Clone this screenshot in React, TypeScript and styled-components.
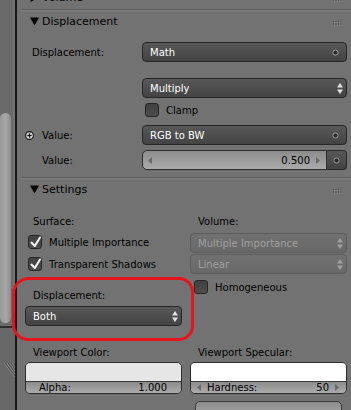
import React from 'react';
import styled, { createGlobalStyle } from 'styled-components';

const GlobalStyle = createGlobalStyle`
  html, body { margin: 0; padding: 0; }
  body { background: #727272; overflow: hidden; }
`;

const FONT = `"DejaVu Sans", "Liberation Sans", sans-serif`;

const Screen = styled.div`
  position: relative;
  display: flex;
  width: 351px;
  height: 410px;
  overflow: hidden;
  background: #727272;
  font-family: ${FONT};
  font-size: 10px;
  color: #000;
`;

const SideArea = styled.div`
  flex: none;
  width: 15px;
  display: flex;
  flex-direction: column;
  border-right: 2px solid #181818;
`;

const SideTop = styled.div`
  flex: none;
  box-sizing: border-box;
  height: 326px;
  padding-top: 113px;
  background: #6a6a6a;
  box-shadow: inset -2px 0 0 #737373;
`;

const ScrollThumb = styled.div`
  width: 11px;
  height: 210px;
  border-radius: 6px;
  background: linear-gradient(to right, #9a9a9a, #a7a7a7 55%, #8a8a8a);
`;

const SideBottom = styled.div`
  flex: 1;
  display: flex;
  justify-content: flex-end;
  padding-top: 35px;
  background: #686868;
  border-top: 2px solid #2e2e2e;
`;

const Region = styled.div`
  flex: 1;
  min-width: 0;
  margin-top: -15px;
  padding-left: 5px;
  display: flex;
  flex-direction: column;
`;

const Panel = styled.section`
  display: flex;
  flex-direction: column;
`;

const PanelHeader = styled.div`
  box-sizing: border-box;
  height: 24px;
  display: flex;
  align-items: center;
  gap: 3px;
  padding: 0 8px;
  border-top: 1px solid #5b5b5b;
  box-shadow: inset 0 1px 0 #808080;
  font-size: 11px;
`;

const HeaderTitle = styled.span`
  flex: 1;
`;

const NodeBody = styled.div`
  display: flex;
  flex-direction: column;
  padding: 9px 4px 7px 3px;
`;

const NodeRow = styled.div<{ $mt?: number }>`
  display: grid;
  grid-template-columns: 117px 1fr;
  align-items: center;
  height: 20px;
  margin-top: ${p => p.$mt ?? 0}px;
`;

const RowLabel = styled.div<{ $indent: number }>`
  display: flex;
  align-items: center;
  gap: 8px;
  padding-left: ${p => p.$indent}px;
`;

const MenuButton = styled.div<{ $disabled?: boolean; $mt?: number }>`
  box-sizing: border-box;
  height: 20px;
  margin-top: ${p => p.$mt ?? 0}px;
  display: flex;
  align-items: center;
  padding: 0 3px 0 7px;
  border-radius: 4px;
  border: 1px solid ${p => (p.$disabled ? '#5c5c5c' : '#272727')};
  background: ${p =>
    p.$disabled ? 'linear-gradient(#717171, #686868)' : 'linear-gradient(#585858, #434343)'};
  color: ${p => (p.$disabled ? '#a0a0a0' : '#ffffff')};
`;

const ButtonText = styled.span`
  flex: 1;
  white-space: nowrap;
`;

const IconSlot = styled.span<{ $mr: number }>`
  display: flex;
  margin-right: ${p => p.$mr}px;
`;

const CheckRow = styled.div<{ $indent?: number; $mt?: number }>`
  height: 20px;
  margin-top: ${p => p.$mt ?? 0}px;
  display: flex;
  align-items: center;
  gap: 7px;
  padding-left: ${p => p.$indent ?? 3}px;
  white-space: nowrap;
`;

const CheckBox = styled.span`
  position: relative;
  flex: none;
  box-sizing: border-box;
  width: 14px;
  height: 14px;
  border-radius: 3px;
  border: 1px solid #262626;
  background: linear-gradient(#404040, #4e4e4e);
  display: flex;
`;

const NumGroup = styled.div`
  display: flex;
  height: 20px;
`;

const NumField = styled.div<{ $radius: string; $pl: number; $pr: number; $bt?: boolean }>`
  flex: 1;
  box-sizing: border-box;
  height: ${p => (p.$bt ? 19 : 20)}px;
  display: flex;
  align-items: center;
  gap: 6px;
  padding: 0 ${p => p.$pr}px 0 ${p => p.$pl}px;
  border: ${p => (p.$bt ? 'none' : '1px solid #2e2e2e')};
  border-radius: ${p => p.$radius};
  background: linear-gradient(#8c8c8c, #ababab);
  color: #000;
`;

const NumLabel = styled.span`
  flex: 1;
  white-space: nowrap;
`;

const LinkButton = styled.div`
  box-sizing: border-box;
  width: 20px;
  height: 20px;
  display: flex;
  align-items: center;
  justify-content: center;
  border: 1px solid #272727;
  border-left: none;
  border-radius: 0 4px 4px 0;
  background: linear-gradient(#585858, #434343);
`;

const SettingsBody = styled.div`
  display: grid;
  grid-template-columns: 1fr 1fr;
  column-gap: 8px;
  row-gap: 16px;
  padding: 10px 4px 0 3px;
`;

const Column = styled.div`
  display: flex;
  flex-direction: column;
  min-width: 0;
`;

const FieldLabel = styled.div<{ $mt?: number }>`
  height: 20px;
  margin-top: ${p => p.$mt ?? 0}px;
  display: flex;
  align-items: center;
  padding-left: 8px;
`;

const ColorStack = styled.div`
  box-sizing: border-box;
  display: flex;
  flex-direction: column;
  border: 1px solid #2e2e2e;
  border-radius: 5px;
  overflow: hidden;
`;

const Swatch = styled.div<{ $color: string }>`
  height: 18px;
  background: ${p => p.$color};
  border-bottom: 1px solid #3a3a3a;
`;

const PartialWidget = styled.div`
  box-sizing: border-box;
  height: 20px;
  margin: 7px 5px 0 5px;
  border: 1px solid #3a3a3a;
  border-radius: 5px;
  background: linear-gradient(#8c8c8c, #ababab);
`;

const RedMark = styled.div`
  position: absolute;
  left: 12px;
  top: 277px;
  width: 182px;
  height: 64px;
  box-sizing: border-box;
  border: 3px solid #e8141d;
  border-radius: 17px 15px 15px 16px;
  pointer-events: none;
`;

/* ---------- drawings ---------- */

const Disclosure = ({ open }: { open: boolean }) => (
  <svg width="9" height="9" viewBox="0 0 9 9" style={{ flex: 'none' }}>
    {open ? (
      <polygon points="0,0.5 9,0.5 4.5,8.5" fill="#000" />
    ) : (
      <polygon points="0.5,0 8.5,4.5 0.5,9" fill="#000" />
    )}
  </svg>
);

const Grip = () => {
  const xs = [0, 2.5, 5, 7.5];
  const ys = [0, 2.5];
  return (
    <svg width="10" height="5" viewBox="0 0 10 5" style={{ flex: 'none', marginTop: 3 }}>
      {ys.map(y =>
        xs.map(x => (
          <g key={`${x}-${y}`}>
            <rect x={x + 1} y={y + 1} width="1" height="1" fill="#8c8c8c" />
            <rect x={x} y={y} width="1" height="1" fill="#454545" />
          </g>
        ))
      )}
    </svg>
  );
};

const SocketIcon = () => (
  <svg width="7" height="7" viewBox="0 0 7 7">
    <circle cx="3.5" cy="3.5" r="2.6" fill="#2a2a2a" stroke="#a2a2a2" strokeWidth="1" />
  </svg>
);

const UpDown = ({ color }: { color: string }) => (
  <svg width="6" height="13" viewBox="0 0 6 13">
    <polygon points="0,5.5 3,1 6,5.5" fill={color} />
    <polygon points="0,7.5 3,12 6,7.5" fill={color} />
  </svg>
);

const Arrow = ({ dir, hidden }: { dir: 'left' | 'right'; hidden?: boolean }) => (
  <svg width="4" height="7" viewBox="0 0 4 7" style={{ flex: 'none', visibility: hidden ? 'hidden' : 'visible' }}>
    {dir === 'left' ? (
      <polygon points="4,0 0,3.5 4,7" fill="#6a6a6a" />
    ) : (
      <polygon points="0,0 4,3.5 0,7" fill="#6a6a6a" />
    )}
  </svg>
);

const CheckMark = () => (
  <svg width="14" height="14" viewBox="0 0 14 14" style={{ position: 'absolute', left: -1, top: -1, overflow: 'visible' }}>
    <polyline points="3.5,7.5 6.8,11 12,2.5" fill="none" stroke="#f2f2f2" strokeWidth="2.1" strokeLinecap="round" strokeLinejoin="round" />
  </svg>
);

const PlusIcon = () => (
  <svg width="9" height="9" viewBox="0 0 9 9" style={{ flex: 'none' }}>
    <circle cx="4.5" cy="4.5" r="3.9" fill="#d8d8d8" stroke="#111" strokeWidth="1.1" />
    <line x1="2.3" y1="4.5" x2="6.7" y2="4.5" stroke="#111" strokeWidth="1.2" />
    <line x1="4.5" y1="2.3" x2="4.5" y2="6.7" stroke="#111" strokeWidth="1.2" />
  </svg>
);

const CornerGrip = () => (
  <svg width="11" height="14" viewBox="0 0 11 14" style={{ flex: 'none' }}>
    {[0, 3, 6, 9].map(o => (
      <g key={o}>
        <line x1={o} y1="0" x2="11" y2={11 - o + 3} stroke="#8e8e8e" strokeWidth="1" />
        <line x1={o + 1} y1="0" x2="11" y2={10 - o + 3} stroke="#4a4a4a" strokeWidth="0.8" />
      </g>
    ))}
  </svg>
);

export default function App() {
  return (
    <>
      <GlobalStyle />
      <Screen>
        <SideArea>
          <SideTop>
            <ScrollThumb />
          </SideTop>
          <SideBottom>
            <CornerGrip />
          </SideBottom>
        </SideArea>

        <Region>
          <Panel>
            <PanelHeader>
              <Disclosure open={false} />
              <HeaderTitle>Volume</HeaderTitle>
              <Grip />
            </PanelHeader>
          </Panel>

          <Panel>
            <PanelHeader>
              <Disclosure open />
              <HeaderTitle>Displacement</HeaderTitle>
              <Grip />
            </PanelHeader>
            <NodeBody>
              <NodeRow>
                <RowLabel $indent={7}>Displacement:</RowLabel>
                <MenuButton>
                  <ButtonText>Math</ButtonText>
                  <IconSlot $mr={4}>
                    <SocketIcon />
                  </IconSlot>
                </MenuButton>
              </NodeRow>
              <NodeRow $mt={16}>
                <span />
                <MenuButton>
                  <ButtonText>Multiply</ButtonText>
                  <IconSlot $mr={0}>
                    <UpDown color="#e2e2e2" />
                  </IconSlot>
                </MenuButton>
              </NodeRow>
              <NodeRow $mt={2}>
                <span />
                <CheckRow>
                  <CheckBox />
                  Clamp
                </CheckRow>
              </NodeRow>
              <NodeRow $mt={5}>
                <RowLabel $indent={0}>
                  <PlusIcon />
                  Value:
                </RowLabel>
                <MenuButton>
                  <ButtonText>RGB to BW</ButtonText>
                  <IconSlot $mr={4}>
                    <SocketIcon />
                  </IconSlot>
                </MenuButton>
              </NodeRow>
              <NodeRow $mt={5}>
                <RowLabel $indent={17}>Value:</RowLabel>
                <NumGroup>
                  <NumField $radius="5px 0 0 5px" $pl={5} $pr={6}>
                    <Arrow dir="left" />
                    <NumLabel />
                    <span>0.500</span>
                    <Arrow dir="right" />
                  </NumField>
                  <LinkButton>
                    <SocketIcon />
                  </LinkButton>
                </NumGroup>
              </NodeRow>
            </NodeBody>
          </Panel>

          <Panel>
            <PanelHeader>
              <Disclosure open />
              <HeaderTitle>Settings</HeaderTitle>
              <Grip />
            </PanelHeader>
            <SettingsBody>
              <Column>
                <FieldLabel>Surface:</FieldLabel>
                <CheckRow $mt={1}>
                  <CheckBox>
                    <CheckMark />
                  </CheckBox>
                  Multiple Importance
                </CheckRow>
                <CheckRow $mt={2}>
                  <CheckBox>
                    <CheckMark />
                  </CheckBox>
                  Transparent Shadows
                </CheckRow>
                <FieldLabel $mt={11}>Displacement:</FieldLabel>
                <MenuButton $mt={1}>
                  <ButtonText>Both</ButtonText>
                  <IconSlot $mr={0}>
                    <UpDown color="#e2e2e2" />
                  </IconSlot>
                </MenuButton>
              </Column>

              <Column>
                <FieldLabel>Volume:</FieldLabel>
                <MenuButton $disabled $mt={2}>
                  <ButtonText>Multiple Importance</ButtonText>
                  <IconSlot $mr={0}>
                    <UpDown color="#a0a0a0" />
                  </IconSlot>
                </MenuButton>
                <MenuButton $disabled $mt={1}>
                  <ButtonText>Linear</ButtonText>
                  <IconSlot $mr={0}>
                    <UpDown color="#a0a0a0" />
                  </IconSlot>
                </MenuButton>
                <CheckRow $mt={3} $indent={4}>
                  <CheckBox />
                  Homogeneous
                </CheckRow>
              </Column>

              <Column>
                <FieldLabel>Viewport Color:</FieldLabel>
                <ColorStack>
                  <Swatch $color="#e6e6e6" />
                  <NumField $radius="0" $pl={13} $pr={14} $bt>
                    <NumLabel>Alpha:</NumLabel>
                    <span>1.000</span>
                  </NumField>
                </ColorStack>
              </Column>

              <Column>
                <FieldLabel>Viewport Specular:</FieldLabel>
                <ColorStack>
                  <Swatch $color="#ffffff" />
                  <NumField $radius="0" $pl={6} $pr={7} $bt>
                    <Arrow dir="left" />
                    <NumLabel>Hardness:</NumLabel>
                    <span>50</span>
                    <Arrow dir="right" />
                  </NumField>
                </ColorStack>
                <PartialWidget />
              </Column>
            </SettingsBody>
          </Panel>
        </Region>

        <RedMark />
      </Screen>
    </>
  );
}
